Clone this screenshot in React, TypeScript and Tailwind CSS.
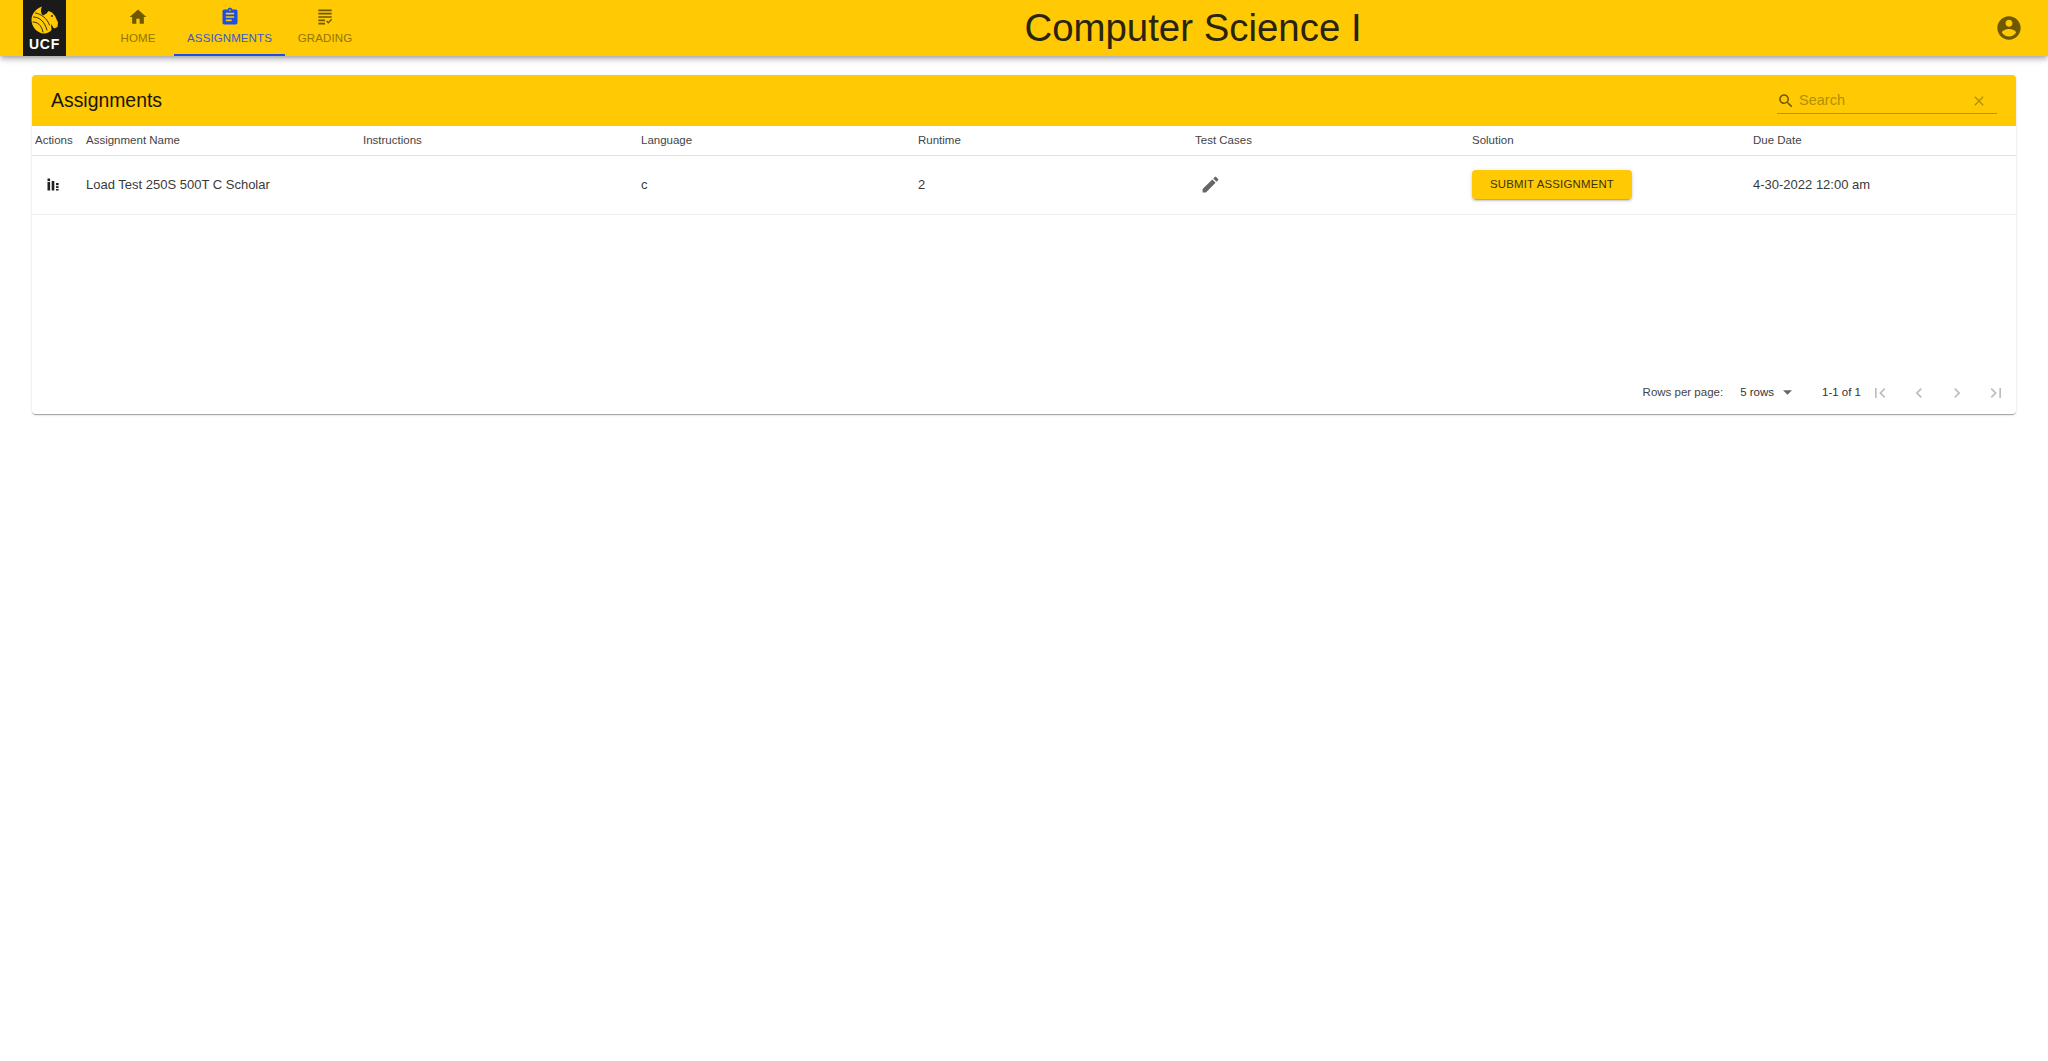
import React from "react";

const P = ({ d, className }: { d: string; className?: string }) => (
  <svg viewBox="0 0 24 24" className={className} fill="currentColor"><path d={d} /></svg>
);

const Tab = ({ label, d, w, active }: { label: string; d: string; w: string; active?: boolean }) => (
  <div className={`${w} h-14 flex flex-col items-center pt-[7px] relative ${active ? "text-[#1e4fe0]" : "text-[#6f5900]"}`}>
    <P d={d} className="w-[20px] h-[20px]" />
    <span className={`text-[11.5px] leading-[14px] mt-[4px] tracking-[0.1px] ${active ? "opacity-90" : "opacity-75"}`}>{label}</span>
    {active && <div className="absolute left-0 right-0 bottom-0 h-[2px] bg-[#1e4fe0]" />}
  </div>
);

const headers = ["Assignment Name", "Instructions", "Language", "Runtime", "Test Cases", "Solution", "Due Date"];
const grid = "grid grid-cols-[54px_277px_278px_277px_277px_277px_281px_1fr]";

export default function App() {
  return (
    <div className="min-h-[1061px] bg-white font-['Liberation_Sans',Arial,sans-serif] text-[#222]">
      <header className="h-14 bg-[#ffc904] flex items-stretch shadow-[0_2px_4px_-1px_rgba(0,0,0,0.2),0_4px_5px_0_rgba(0,0,0,0.14),0_1px_10px_0_rgba(0,0,0,0.12)] relative">
        <div className="w-[43px] ml-[23px] bg-[#1a1a1a] flex flex-col items-center pt-[6px]">
          <svg viewBox="0 0 28 28" className="w-[28px] h-[28px]">
            <path fill="#ffc904" d="M11 0.5 C4.5 3 0.5 8 0.5 14 C0.5 20 5 26 11.5 27.5 C15.5 28 18.5 26.5 20.5 24 L20 18 L23 22.5 L26.5 21 L27 16.5 L24 10 L21 6.5 L17.5 5 L15.5 7.5 L12 9.5 C9.5 7 9.5 3.5 11 0.5 Z" />
            <path fill="#1a1a1a" d="M15 2.5 L18 3.5 L16 5.5 Z" />
            <g fill="none" stroke="#1a1a1a" strokeWidth="0.9" strokeLinecap="round">
              <path d="M2.5 11 C8 11 13.5 15 16 24" />
              <path d="M2 16 C6.5 16 10.5 19 12 26" />
              <path d="M4.5 7 C10 8 16 12 18.5 19" />
            </g>
            <circle cx="21" cy="10" r="0.9" fill="#1a1a1a" />
          </svg>
          <span className="text-white font-bold text-[14px] leading-[14px] mt-[3px] tracking-[0.8px]">UCF</span>
        </div>
        <nav className="flex ml-[36px]">
          <Tab label="HOME" w="w-[72px]" d="M10 20v-6h4v6h5v-8h3L12 3 2 12h3v8z" />
          <Tab label="ASSIGNMENTS" w="w-[111px]" active d="M19 3h-4.18C14.4 1.84 13.3 1 12 1c-1.3 0-2.4.84-2.82 2H5c-1.1 0-2 .9-2 2v14c0 1.1.9 2 2 2h14c1.1 0 2-.9 2-2V5c0-1.1-.9-2-2-2zm-7 0c.55 0 1 .45 1 1s-.45 1-1 1-1-.45-1-1 .45-1 1-1zm2 14H7v-2h7v2zm3-4H7v-2h10v2zm0-4H7V7h10v2z" />
          <Tab label="GRADING" w="w-[80px]" d="M4 3h16v2H4zm0 4h16v2H4zm0 4h16v2H4zm0 4h8v2H4zm0 4h8v2H4zm16.6-3.6-4.6 4.6-2.6-2.6 1.2-1.2 1.4 1.4 3.4-3.4z" />
        </nav>
        <h1 className="absolute left-0 right-0 top-0 h-14 flex items-center justify-center text-[38.4px] font-normal text-[#2a2310] pl-[338px] leading-none">Computer Science I</h1>
        <div className="ml-auto mr-[25px] self-center text-[#6f5900]">
          <P d="M12 2C6.48 2 2 6.48 2 12s4.48 10 10 10 10-4.48 10-10S17.52 2 12 2zm0 3c1.66 0 3 1.34 3 3s-1.34 3-3 3-3-1.34-3-3 1.34-3 3-3zm0 14.2c-2.5 0-4.71-1.28-6-3.22.03-1.99 4-3.08 6-3.08 1.99 0 5.97 1.09 6 3.08-1.29 1.94-3.5 3.22-6 3.22z" className="w-7 h-7" />
        </div>
      </header>

      <main className="mx-8 mt-[19px] h-[339px] rounded-[4px] bg-white shadow-[0_2px_1px_-1px_rgba(0,0,0,0.2),0_1px_1px_0_rgba(0,0,0,0.14),0_1px_3px_0_rgba(0,0,0,0.12)] flex flex-col">
        <div className="h-[51px] bg-[#ffc904] rounded-t-[4px] flex items-center pl-[19px] pr-[19px]">
          <h2 className="text-[19.4px] font-normal text-[#1a1608] leading-none">Assignments</h2>
          <div className="ml-auto mt-[1px] w-[220px] h-[26px] border-b border-[#b89400] flex items-center text-[#6f5900]">
            <P d="M15.5 14h-.79l-.28-.27C15.41 12.59 16 11.11 16 9.5 16 5.91 13.09 3 9.5 3S3 5.91 3 9.5 5.91 16 9.5 16c1.61 0 3.09-.59 4.23-1.57l.27.28v.79l5 4.99L20.49 19l-4.99-5zm-6 0C7.01 14 5 11.99 5 9.5S7.01 5 9.5 5 14 7.01 14 9.5 11.99 14 9.5 14z" className="w-[18px] h-[18px]" />
            <span className="ml-[4px] text-[14.5px] text-[#b39000]">Search</span>
            <P d="M19 6.41 17.59 5 12 10.59 6.41 5 5 6.41 10.59 12 5 17.59 6.41 19 12 13.41 17.59 19 19 17.59 13.41 12z" className="w-[16px] h-[16px] ml-auto mr-[10px] text-[#b39000]" />
          </div>
        </div>

        <div className={`${grid} h-[30px] items-center border-b border-[#e0e0e0] text-[11.5px] text-[#444]`}>
          <div className="pl-[3px]">Actions</div>
          {headers.map((h) => <div key={h}>{h}</div>)}
        </div>

        <div className={`${grid} h-[59px] items-center border-b border-[#eeeeee] text-[13px] text-[#3a3a3a]`}>
          <div className="pl-[15px] pb-[1px] text-[#222]">
            <svg viewBox="0 0 12 13" className="w-[12px] h-[13px]" fill="currentColor">
              <rect x="0.5" y="0.5" width="2.6" height="2.6" />
              <rect x="0.5" y="4" width="2.6" height="8.5" />
              <rect x="4.7" y="3" width="2.6" height="9.5" />
              <rect x="9" y="5" width="2.6" height="2.2" />
              <rect x="9" y="8.2" width="2.6" height="1.8" />
              <rect x="9" y="11" width="2.6" height="1.5" />
            </svg>
          </div>
          <div>Load Test 250S 500T C Scholar</div>
          <div />
          <div>c</div>
          <div>2</div>
          <div className="pl-[5px] pb-[2px] text-[#666]">
            <P d="M3 17.25V21h3.75L17.81 9.94l-3.75-3.75L3 17.25zM20.71 7.04c.39-.39.39-1.02 0-1.41l-2.34-2.34a.9959.9959 0 0 0-1.41 0l-1.83 1.83 3.75 3.75 1.83-1.83z" className="w-[21px] h-[21px]" />
          </div>
          <div className="pb-[1px]">
            <button className="w-[160px] h-[29px] rounded-[4px] bg-[#ffc904] text-[11.4px] text-[#3d3208] tracking-[0.2px] shadow-[0_3px_1px_-2px_rgba(0,0,0,0.2),0_2px_2px_0_rgba(0,0,0,0.14),0_1px_5px_0_rgba(0,0,0,0.12)]">SUBMIT ASSIGNMENT</button>
          </div>
          <div>4-30-2022 12:00 am</div>
        </div>

        <div className="mt-auto h-[52px] mb-[-1px] flex items-center justify-end text-[11.5px] text-[#333] pr-[1px] pt-[7px]">
          <span className="text-[#444]">Rows per page:</span>
          <span className="ml-[17px]">5 rows</span>
          <svg viewBox="0 0 10 5" className="w-[9px] h-[5px] ml-[9px] text-[#666]" fill="currentColor"><path d="M0 0h10L5 5z" /></svg>
          <span className="ml-[30px]">1-1 of 1</span>
          <div className="flex text-[#bdbdbd]">
            {["M18.41 16.59 13.82 12l4.59-4.59L17 6l-6 6 6 6zM6 6h2v12H6z",
              "M15.41 7.41 14 6l-6 6 6 6 1.41-1.41L10.83 12z",
              "M10 6 8.59 7.41 13.17 12l-4.58 4.59L10 18l6-6z",
              "M5.59 7.41 10.18 12l-4.59 4.59L7 18l6-6-6-6zM16 6h2v12h-2z"].map((d) => (
              <div key={d} className="w-[38.5px] flex justify-center"><P d={d} className="w-[20px] h-[20px]" /></div>
            ))}
          </div>
        </div>
      </main>
    </div>
  );
}
